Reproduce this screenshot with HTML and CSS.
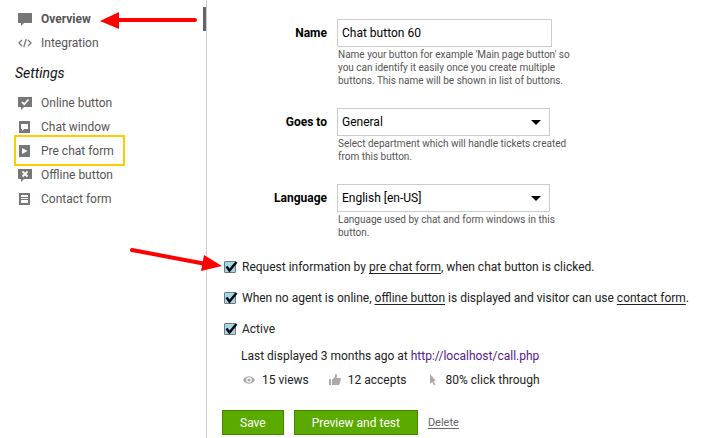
FILE: index.html
```
<!DOCTYPE html>
<html lang="en">

<head>
    <meta charset="UTF-8">
    <meta name="viewport" content="width=device-width, initial-scale=1.0">
    <title>Chat button</title>

    <link rel="stylesheet" href="styles.css">
</head>

<body>
    <div class="page">
        <nav class="sidebar">
            <a class="nav-item active" href="#overview">
                <svg class="nav-icon" viewBox="0 0 14 14"><path d="M0 1h14v10H6l-3 3v-3H0z"/></svg>
                Overview
            </a>
            <a class="nav-item" href="#integration">
                <svg class="nav-icon line" viewBox="0 0 14 14"><path d="M4 4L1 7l3 3M10 4l3 3-3 3M8.200 3l-2.400 8"/></svg>
                Integration
            </a>
            <h2 class="nav-title">Settings</h2>
            <a class="nav-item" href="#online">
                <svg class="nav-icon" viewBox="0 0 14 14"><path d="M0 1h14v10H6l-3 3v-3H0z"/><path class="cut" d="M4 6l2.200 2.300L10.500 3.500"/></svg>
                Online button
            </a>
            <a class="nav-item" href="#window">
                <svg class="nav-icon" viewBox="0 0 14 14"><path d="M1 1h11v12H1z"/><path class="hole" d="M3 4h7v5H6l-2 2V9H3z"/></svg>
                Chat window
            </a>
            <a class="nav-item" href="#prechat">
                <svg class="nav-icon" viewBox="0 0 14 14"><path d="M1 1h11v12H1z"/><path class="hole" d="M4 4l5.500 3L4 10z"/></svg>
                Pre chat form
                <span class="highlight"></span>
            </a>
            <a class="nav-item" href="#offline">
                <svg class="nav-icon" viewBox="0 0 14 14"><path d="M0 1h14v10H6l-3 3v-3H0z"/><path class="cut" d="M4.500 3.500l5 5M9.500 3.500l-5 5"/></svg>
                Offline button
            </a>
            <a class="nav-item" href="#contact">
                <svg class="nav-icon" viewBox="0 0 14 14"><path d="M1 1h11v12H1z"/><path class="hole" d="M3 3h7v2H3zM3 6h7v1H3zM3 8h7v3H3z"/></svg>
                Contact form
            </a>
        </nav>

        <form class="content">
            <div class="fields">
                <div class="field">
                    <label for="name">Name</label>
                    <input class="control text" id="name" type="text" value="Chat button 60">
                    <p class="hint">Name your button for example 'Main page button' so you can identify it easily once you create multiple buttons. This name will be shown in list of buttons.</p>
                </div>
                <div class="field">
                    <label for="department">Goes to</label>
                    <div class="select-wrap">
                        <select class="control" id="department">
                            <option>General</option>
                        </select>
                    </div>
                    <p class="hint">Select department which will handle tickets created from this button.</p>
                </div>
                <div class="field">
                    <label for="language">Language</label>
                    <div class="select-wrap">
                        <select class="control" id="language">
                            <option>English [en-US]</option>
                        </select>
                    </div>
                    <p class="hint">Language used by chat and form windows in this button.</p>
                </div>
            </div>

            <div class="checks">
                <div class="check">
                    <span class="box">
                        <input type="checkbox" id="request" checked>
                        <svg class="tick" viewBox="0 0 14 14"><path d="M2.500 6.500l3 4L12.500 2"/></svg>
                    </span>
                    <label for="request">Request information by <a href="#prechat">pre chat form</a>, when chat button is clicked.</label>
                </div>
                <div class="check">
                    <span class="box">
                        <input type="checkbox" id="no-agent" checked>
                        <svg class="tick" viewBox="0 0 14 14"><path d="M2.500 6.500l3 4L12.500 2"/></svg>
                    </span>
                    <label for="no-agent">When no agent is online, <a href="#offline">offline button</a> is displayed and visitor can use <a href="#contact">contact form</a>.</label>
                </div>
                <div class="check">
                    <span class="box">
                        <input type="checkbox" id="active" checked>
                        <svg class="tick" viewBox="0 0 14 14"><path d="M2.500 6.500l3 4L12.500 2"/></svg>
                    </span>
                    <label for="active">Active</label>
                </div>
            </div>

            <p class="last-seen">Last displayed 3 months ago at <a href="http://localhost/call.php">http://localhost/call.php</a></p>
            <div class="stats">
                <span class="stat">
                    <svg viewBox="0 0 12 12"><path fill-rule="evenodd" d="M0 6c3-5 9-5 12 0-3 5-9 5-12 0zM6 3.200a2.800 2.800 0 1 0 0 5.600 2.800 2.800 0 0 0 0-5.600z"/><circle cx="6" cy="6" r="1.600"/></svg>
                    15 views
                </span>
                <span class="stat">
                    <svg viewBox="0 0 12 12"><path d="M0 5h2v6H0zM3 5.500L6 3V0.500c1.500-.8 2.500.5 2 2L7.500 4H11c1 0 1 1 .8 1.500L10.500 10c-.2.700-.6 1-1.200 1H3z"/></svg>
                    12 accepts
                </span>
                <span class="stat">
                    <svg viewBox="0 0 12 12"><path d="M3 0l6 7H6.500l2 3.500-1.500.8L5.200 8 3 10z"/></svg>
                    80% click through
                </span>
            </div>

            <div class="actions">
                <button class="btn" type="button">Save</button>
                <button class="btn" type="button">Preview and test</button>
                <a class="delete" href="#delete">Delete</a>
            </div>
        </form>

        <!-- red pointers drawn over the page -->
        <svg class="arrow arrow-nav" viewBox="0 0 100 20"><path class="shaft" d="M18 10h77"/><path d="M0 11L19 2v17z"/></svg>
        <svg class="arrow arrow-check" viewBox="0 0 94 26"><path class="shaft" d="M2 4l74 14"/><path d="M92 20L74 9l-3 16z"/></svg>
    </div>
</body>

</html>
```
FILE: styles.css
```
* {
    margin: 0;
    padding: 0;
    box-sizing: border-box;
}

body {
    font-family: Roboto, "Liberation Sans", sans-serif;
    font-size: 12px;
    line-height: 16px;
    color: #222;
    background-color: #fff;
}

.page {
    position: relative;
    display: flex;
    min-height: 100vh;
}

/* sidebar */

.sidebar {
    flex: 0 0 207px;
    padding-top: 7px;
    border-right: 1px solid #ccc;
}

.nav-item {
    position: relative;
    display: flex;
    align-items: center;
    gap: 9px;
    height: 24px;
    padding-left: 18px;
    color: #555;
    text-decoration: none;
}

.nav-item.active {
    font-weight: bold;
    border-right: 3px solid #666;
}

.nav-icon {
    width: 14px;
    height: 14px;
    fill: #777;
}

.nav-icon.line {
    fill: none;
    stroke: #777;
    stroke-width: 1.3;
}

.nav-icon .cut {
    fill: none;
    stroke: #fff;
    stroke-width: 1.8;
}

.nav-icon .hole {
    fill: #fff;
}

.nav-title {
    padding: 9px 0 9px 15px;
    font-size: 14px;
    line-height: 18px;
    font-weight: normal;
    font-style: italic;
    color: #111;
}

.highlight {
    position: absolute;
    left: 14px;
    top: -4px;
    width: 111px;
    height: 31px;
    border: 2px solid #fc0;
}

/* form */

.content {
    flex: 1;
    padding: 19px 8px 3px 15px;
}

.fields {
    display: flex;
    flex-direction: column;
    gap: 21px;
    padding-bottom: 20px;
}

.field {
    display: grid;
    grid-template-columns: 105px 1fr;
    column-gap: 10px;
    row-gap: 1px;
    align-items: center;
}

.field label {
    text-align: right;
    font-weight: bold;
    color: #000;
}

.control {
    width: 100%;
    height: 28px;
    padding: 0 4px;
    border: 1px solid #ccc;
    border-radius: 0;
    background-color: #fff;
    font: inherit;
    color: #000;
    appearance: none;
}

.control.text {
    max-width: 215px;
}

.select-wrap {
    position: relative;
    display: flex;
    max-width: 213px;
}

.select-wrap::after {
    content: "";
    position: absolute;
    right: 9px;
    top: 12px;
    border: 5px solid transparent;
    border-top-color: #000;
    border-bottom: 0;
    pointer-events: none;
}

.hint {
    grid-column: 2;
    max-width: 240px;
    padding-left: 1px;
    font-size: 10px;
    line-height: 13px;
    color: #555;
}

.checks {
    display: flex;
    flex-direction: column;
    gap: 15px;
    padding: 0 0 11px 2px;
}

.check {
    display: flex;
    align-items: center;
    gap: 6px;
}

.check a {
    color: inherit;
    text-underline-offset: 2px;
}

.box {
    position: relative;
    display: flex;
}

.box input {
    width: 12px;
    height: 12px;
    border: 1px solid #777;
    border-radius: 1px;
    background-color: #a0d8ef;
    appearance: none;
}

.tick {
    position: absolute;
    left: 0;
    top: -1px;
    width: 14px;
    height: 14px;
    fill: none;
    stroke: #000;
    stroke-width: 2.4;
    pointer-events: none;
}

.last-seen {
    padding-left: 19px;
}

.last-seen a {
    color: #551a8b;
    text-decoration: none;
}

.stats {
    display: flex;
    gap: 20px;
    padding: 8px 0 0 21px;
}

.stat {
    display: flex;
    align-items: center;
    gap: 7px;
}

.stat svg {
    width: 12px;
    height: 12px;
    fill: #aaa;
}

.actions {
    display: flex;
    align-items: center;
    gap: 10px;
    margin-top: 22px;
}

.btn {
    height: 25px;
    padding: 0 17px;
    border: 1px solid #458500;
    background-color: #5aaa00;
    font: inherit;
    color: #fff;
}

.delete {
    font-size: 11px;
    color: #666;
    text-underline-offset: 2px;
}

/* pointers */

.arrow {
    position: absolute;
    fill: #f00;
}

.arrow .shaft {
    fill: none;
    stroke: #f00;
    stroke-width: 4;
    stroke-linecap: round;
}

.arrow-nav {
    left: 100px;
    top: 10px;
    width: 100px;
    height: 20px;
}

.arrow-check {
    left: 130px;
    top: 246px;
    width: 94px;
    height: 26px;
}
```
